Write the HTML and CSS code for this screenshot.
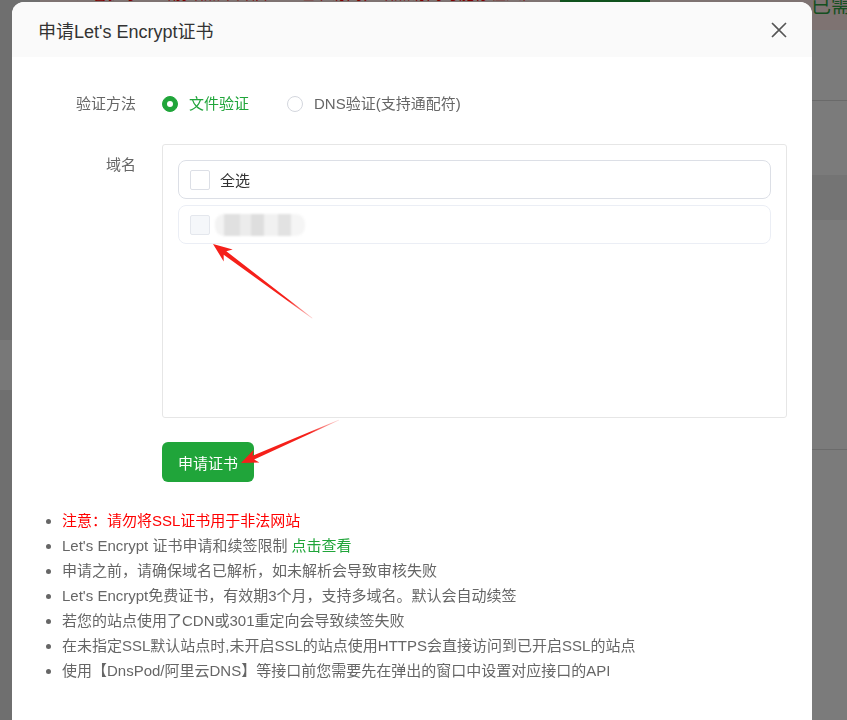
FILE: index.html
```html
<!DOCTYPE html>
<html lang="zh-CN">
  <head>
    <meta charset="UTF-8" />
    <meta name="viewport" content="width=device-width, initial-scale=1.0" />
    <title>申请Let's Encrypt证书</title>
    <link rel="stylesheet" href="styles.css">
  </head>
  <body>
    <!-- page behind the dialog -->
    <div class="page">
      <div class="page-side">
        <div class="side-top"></div>
        <div class="side-band"></div>
      </div>
      <div class="page-main">
        <div class="page-alert">
          <span class="alert-text">温馨提示：当前站点未开启SSL证书访问，站点访问可能存在风险</span>
          <span class="alert-btn">申请证书</span>
          <span class="alert-tip">已需</span>
        </div>
        <div class="page-block block-a"></div>
        <div class="page-block block-b"></div>
        <div class="page-block block-band"></div>
        <div class="page-block block-c"></div>
      </div>
    </div>
    <div class="mask"></div>

    <div class="dialog">
      <div class="dialog-header">
        <span class="dialog-title">申请Let's Encrypt证书</span>
        <svg class="dialog-close" width="16" height="16" viewBox="0 0 16 16">
          <path d="M1 1L15 15M15 1L1 15" stroke="#555" stroke-width="1.6" fill="none" />
        </svg>
      </div>

      <div class="dialog-body">
        <div class="form-row">
          <div class="form-label">验证方法</div>
          <div class="form-content">
            <label class="radio checked"><span class="radio-dot"></span>文件验证</label>
            <label class="radio"><span class="radio-dot"></span>DNS验证(支持通配符)</label>
          </div>
        </div>

        <div class="form-row">
          <div class="form-label label-top">域名</div>
          <div class="form-content">
            <div class="domain-box">
              <div class="domain-item item-all">
                <span class="check"></span>
                <span class="domain-text">全选</span>
              </div>
              <div class="domain-item">
                <span class="check check-muted"></span>
                <span class="domain-blur"></span>
              </div>
            </div>
          </div>
        </div>

        <div class="form-row">
          <div class="form-label"></div>
          <div class="form-content">
            <button class="btn-apply">申请证书</button>
          </div>
        </div>

        <ul class="tips">
          <li class="tip-red">注意：请勿将SSL证书用于非法网站</li>
          <li>Let's Encrypt 证书申请和续签限制 <a class="tip-link">点击查看</a></li>
          <li>申请之前，请确保域名已解析，如未解析会导致审核失败</li>
          <li>Let's Encrypt免费证书，有效期3个月，支持多域名。默认会自动续签</li>
          <li>若您的站点使用了CDN或301重定向会导致续签失败</li>
          <li>在未指定SSL默认站点时,未开启SSL的站点使用HTTPS会直接访问到已开启SSL的站点</li>
          <li>使用【DnsPod/阿里云DNS】等接口前您需要先在弹出的窗口中设置对应接口的API</li>
        </ul>
      </div>
    </div>

    <!-- screenshot annotations -->
    <svg class="marks" width="847" height="720" viewBox="0 0 847 720">
      <defs>
        <linearGradient id="fade1" gradientUnits="userSpaceOnUse" x1="0" y1="0" x2="124" y2="0">
          <stop offset="0" stop-color="#f5201a" />
          <stop offset="0.75" stop-color="#f5201a" />
          <stop offset="1" stop-color="#f5201a" stop-opacity="0.2" />
        </linearGradient>
        <linearGradient id="fade2" gradientUnits="userSpaceOnUse" x1="0" y1="0" x2="107" y2="0">
          <stop offset="0" stop-color="#f5201a" />
          <stop offset="0.7" stop-color="#f5201a" />
          <stop offset="1" stop-color="#f5201a" stop-opacity="0.15" />
        </linearGradient>
      </defs>
      <g transform="translate(213 244) rotate(36.8)">
        <polygon points="0,0 19,-7.5 15,-2.2 124,-0.4 124,0.4 15,2.2 19,7.5" fill="url(#fade1)" />
      </g>
      <g transform="translate(241 463) rotate(-23.7)">
        <polygon points="0,0 17,-7 13.5,-2 107,-0.4 107,0.4 13.5,2 17,7" fill="url(#fade2)" />
      </g>
    </svg>
  </body>
</html>
```

FILE: styles.css
```css
* {
  box-sizing: border-box;
}
body {
  margin: 0;
  width: 847px;
  height: 720px;
  overflow: hidden;
  font-family: "Liberation Sans", "Noto Sans CJK SC", sans-serif;
  background: #f6f6f6;
}

/* page behind the mask */
.page {
  display: flex;
  height: 720px;
}
.page-side {
  width: 40px;
  background: #dedede;
  display: flex;
  flex-direction: column;
}
.side-top {
  height: 340px;
}
.side-band {
  height: 50px;
  background: #f0f0f0;
}
.page-main {
  flex: 1;
  display: flex;
  flex-direction: column;
}
.page-alert {
  height: 30px;
  background: #fce6e4;
  display: flex;
  align-items: flex-start;
  padding-left: 36px;
  overflow: hidden;
}
.alert-text {
  margin-top: -16px;
  font-size: 16px;
  line-height: 20px;
  color: #f00;
}
.alert-btn {
  margin: -20px 0 0 22px;
  width: 90px;
  height: 23px;
  background: #20a53a;
  color: #fff;
  font-size: 14px;
}
.alert-tip {
  margin: -6px 0 0 auto;
  font-size: 20px;
  line-height: 24px;
  color: #2a9e40;
  width: 36px;
  overflow: hidden;
  white-space: nowrap;
}
.block-a {
  height: 71px;
  border-bottom: 1px solid #d4d4d4;
}
.block-b {
  height: 74px;
}
.block-band {
  height: 45px;
  background: #e8e8e8;
}
.block-c {
  height: 230px;
  border-bottom: 1px solid #d6d6d6;
}

.mask {
  position: fixed;
  inset: 0;
  background: rgba(0, 0, 0, 0.5);
}

/* dialog */
.dialog {
  position: absolute;
  top: 2px;
  left: 12px;
  width: 800px;
  height: 760px;
  background: #fff;
  border-radius: 12px 12px 0 0;
  overflow: hidden;
}
.dialog-header {
  height: 55px;
  background: #fafafa;
  display: flex;
  align-items: center;
  justify-content: space-between;
  padding: 0 25px 0 26px;
}
.dialog-title {
  font-size: 18px;
  color: #333;
}
.dialog-close {
  display: block;
}

.dialog-body {
  padding: 31px 25px 0 0;
}
.form-row {
  display: flex;
  margin-bottom: 24px;
}
.form-label {
  width: 150px;
  flex-shrink: 0;
  padding-right: 26px;
  text-align: right;
  font-size: 15px;
  line-height: 32px;
  color: #666;
}
.label-top {
  padding-top: 5px;
}
.form-content {
  flex: 1;
  display: flex;
  align-items: center;
}

.radio {
  display: flex;
  align-items: center;
  font-size: 15px;
  line-height: 32px;
  color: #666;
  margin-right: 38px;
}
.radio-dot {
  width: 16px;
  height: 16px;
  margin-right: 11px;
  border: 1px solid #d3d6dd;
  border-radius: 50%;
  background: #fff;
  display: flex;
  align-items: center;
  justify-content: center;
}
.radio.checked {
  color: #20a53a;
}
.radio.checked .radio-dot {
  border-color: #20a53a;
  background: #20a53a;
}
.radio.checked .radio-dot::after {
  content: "";
  width: 6px;
  height: 6px;
  border-radius: 50%;
  background: #fff;
}

.domain-box {
  width: 100%;
  height: 274px;
  border: 1px solid #e6e6e6;
  border-radius: 3px;
  padding: 15px;
  display: flex;
  flex-direction: column;
  gap: 6px;
}
.domain-item {
  height: 39px;
  border: 1px solid #ebeef5;
  border-radius: 8px;
  display: flex;
  align-items: center;
  padding: 0 11px;
}
.item-all {
  border-color: #dcdfe6;
}
.check {
  width: 20px;
  height: 20px;
  border: 1px solid #dcdfe6;
  border-radius: 2px;
  background: #fff;
  margin-right: 10px;
}
.check-muted {
  background: #f5f7fa;
  border-color: #e4e7ed;
}
.domain-text {
  font-size: 15px;
  color: #333;
}
.domain-blur {
  width: 90px;
  height: 22px;
  margin-left: -5px;
  border-radius: 9px;
  background: linear-gradient(90deg, #f3f3f3 0 10%, #e0e0e0 10% 28%, #ececec 28% 40%, #dedede 40% 54%, #f1f1f1 54% 70%, #e2e2e2 70% 84%, #f5f5f5 84%);
  filter: blur(1.2px);
}

.btn-apply {
  width: 92px;
  height: 40px;
  border: none;
  border-radius: 6px;
  background: #20a53a;
  color: #fff;
  font-family: inherit;
  font-size: 15px;
  cursor: pointer;
}

.tips {
  margin: 26px 0 0;
  padding-left: 50px;
  font-size: 15px;
  line-height: 25px;
  color: #666;
}
.tip-red {
  color: #f00;
}
.tip-red::marker {
  color: #666;
}
.tip-link {
  color: #20a53a;
  cursor: pointer;
}

.marks {
  position: fixed;
  top: 0;
  left: 0;
  pointer-events: none;
}
```
